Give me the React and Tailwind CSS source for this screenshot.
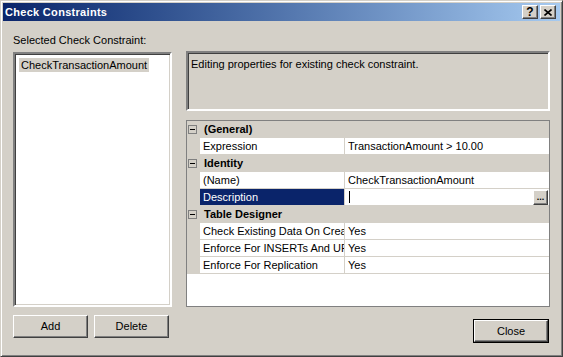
import React from 'react'

const ROWS = [
  { category: '(General)' },
  { name: 'Expression', value: 'TransactionAmount > 10.00' },
  { category: 'Identity' },
  { name: '(Name)', value: 'CheckTransactionAmount' },
  { name: 'Description', value: '', selected: true },
  { category: 'Table Designer' },
  { name: 'Check Existing Data On Creation Or Re-Enabling', value: 'Yes' },
  { name: 'Enforce For INSERTs And UPDATEs', value: 'Yes' },
  { name: 'Enforce For Replication', value: 'Yes' },
]

function Button({ label, isDefault, className = '' }) {
  if (isDefault) {
    return (
      <div className={`border border-black ${className}`}>
        <div className="w-full h-full flex items-center justify-center border border-t-white border-l-white border-r-[#404040] border-b-[#404040] shadow-[inset_-1px_-1px_0_#808080] text-black">
          {label}
        </div>
      </div>
    )
  }
  return (
    <div
      className={`flex items-center justify-center border border-t-white border-l-white border-r-[#404040] border-b-[#404040] shadow-[inset_-1px_-1px_0_#808080] text-black ${className}`}
    >
      {label}
    </div>
  )
}

function TitleButton({ children }) {
  return (
    <div className="w-[16px] h-[14px] bg-[#d4d0c8] border border-t-white border-l-white border-r-[#404040] border-b-[#404040] shadow-[inset_-1px_-1px_0_#808080] flex items-center justify-center text-black font-bold text-[12px] leading-none">
      {children}
    </div>
  )
}

function MinusBox() {
  return (
    <div className="w-[9px] h-[9px] border border-[#808080] flex items-center justify-center">
      <div className="w-[5px] h-[1px] bg-black" />
    </div>
  )
}

function GridRow({ row }) {
  if (row.category) {
    return (
      <div className="h-[17px] flex items-center bg-[#d4d0c8] border-b border-[#d4d0c8]">
        <div className="w-[13px] pl-[1px] flex items-center">
          <MinusBox />
        </div>
        <span className="pl-[4px] font-bold">{row.category}</span>
      </div>
    )
  }
  return (
    <div className="h-[17px] flex border-b border-[#d4d0c8]">
      <div className="w-[13px] bg-[#d4d0c8]" />
      <div
        className={`w-[145px] pl-[3px] flex items-center overflow-hidden whitespace-nowrap border-r border-[#d4d0c8] ${
          row.selected ? 'bg-[#0a246a] text-white' : 'bg-white text-black'
        }`}
      >
        {row.name}
      </div>
      <div className="flex-1 pl-[3px] flex items-center bg-white whitespace-nowrap">
        {row.selected ? (
          <>
            <div className="w-[1px] h-[12px] bg-black ml-[1px]" />
            <div className="ml-auto mr-[1px] w-[15px] h-[15px] flex items-end justify-center pb-[2px] border border-t-white border-l-white border-r-[#404040] border-b-[#404040] shadow-[inset_-1px_-1px_0_#808080] bg-[#d4d0c8] text-[9px] font-bold leading-none">
              ...
            </div>
          </>
        ) : (
          row.value
        )}
      </div>
    </div>
  )
}

export default function App() {
  return (
    <div className="w-[563px] h-[357px] bg-[#d4d0c8] border border-t-[#d4d0c8] border-l-[#d4d0c8] border-r-[#404040] border-b-[#404040] shadow-[inset_1px_1px_0_#fff,inset_-1px_-1px_0_#808080] p-[2px] flex flex-col font-['Liberation_Sans',Arial,sans-serif] text-[11px] leading-[13px] text-black">
      {/* Title bar */}
      <div className="h-[18px] flex items-center bg-gradient-to-r from-[#0a246a] to-[#a6caf0] pl-[2px] pr-[4px]">
        <span className="text-white font-bold tracking-[0.3px]">Check Constraints</span>
        <div className="ml-auto flex gap-[2px]">
          <TitleButton>?</TitleButton>
          <TitleButton>
            <svg width="8" height="7" viewBox="0 0 8 7">
              <path d="M0.5 0.5 L7.5 6.5 M7.5 0.5 L0.5 6.5" stroke="black" strokeWidth="1.6" />
            </svg>
          </TitleButton>
        </div>
      </div>

      {/* Body */}
      <div className="flex-1 flex flex-col pl-[10px] pr-[10px] pt-[13px]">
        <div className="flex">
          <div className="w-[159px] flex flex-col">
            <div className="h-[13px] mb-[5px]">Selected Check Constraint:</div>
            <div className="h-[255px] bg-white border-2 border-t-[#808080] border-l-[#808080] border-r-white border-b-white shadow-[inset_1px_1px_0_#404040,inset_-1px_-1px_0_#d4d0c8] pt-[4px] pl-[4px]">
              <span className="inline-block bg-[#d4d0c8] px-[2px] h-[14px] leading-[14px]">
                CheckTransactionAmount
              </span>
            </div>
          </div>

          <div className="ml-[14px] flex-1 flex flex-col pt-[17px]">
            <div className="h-[60px] border-2 border-t-[#808080] border-l-[#808080] border-r-white border-b-white shadow-[inset_1px_1px_0_#404040,inset_-1px_-1px_0_#d4d0c8] pl-[3px] pt-[5px]">
              Editing properties for existing check constraint.
            </div>
            <div className="mt-[9px] h-[187px] border border-[#808080] bg-white flex flex-col">
              {ROWS.map((row, i) => (
                <GridRow key={i} row={row} />
              ))}
            </div>
          </div>
        </div>

        <div className="flex items-start mt-[8px]">
          <Button label="Add" className="w-[75px] h-[23px]" />
          <Button label="Delete" className="w-[75px] h-[23px] ml-[6px]" />
          <Button label="Close" isDefault className="w-[76px] h-[24px] ml-auto mt-[4px] mr-[1px]" />
        </div>
      </div>
    </div>
  )
}
